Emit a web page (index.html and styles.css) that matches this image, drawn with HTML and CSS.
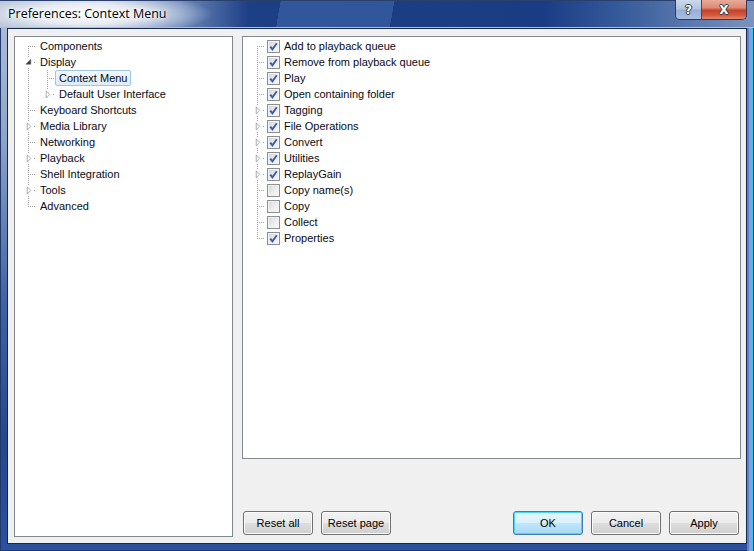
FILE: index.html
```html
<!DOCTYPE html>
<html>
<head>
<meta charset="utf-8">
<link rel="stylesheet" href="styles.css">
</head>
<body>
<div class="window">
  <div class="titlebar">
    <span class="title">Preferences: Context Menu</span>
    <div class="caption">
      <span class="cap help">?</span>
      <span class="cap close">X</span>
    </div>
  </div>
  <div class="client">
    <div class="panel nav">
      <div class="row"><span class="conn first"></span><span class="lbl">Components</span></div>
      <div class="row"><span class="conn mid"><span class="exp"><svg width="9" height="10" viewBox="0 0 9 10"><path d="M6.5 2 L6.5 7.5 L1 7.5 Z" fill="#3a3a3a" stroke="#5a5a5a" stroke-width="0.6"/></svg></span></span><span class="lbl">Display</span></div>
      <div class="row"><span class="ind"></span><span class="conn mid"></span><span class="lbl sel">Context Menu</span></div>
      <div class="row"><span class="ind"></span><span class="conn last"><span class="exp"><svg width="9" height="10" viewBox="0 0 9 10"><path d="M2.5 1.5 L6.5 5.5 L2.5 9.5 Z" fill="#fff" stroke="#a2a2a2"/></svg></span></span><span class="lbl">Default User Interface</span></div>
      <div class="row"><span class="conn mid"></span><span class="lbl">Keyboard Shortcuts</span></div>
      <div class="row"><span class="conn mid"><span class="exp"><svg width="9" height="10" viewBox="0 0 9 10"><path d="M2.5 1.5 L6.5 5.5 L2.5 9.5 Z" fill="#fff" stroke="#a2a2a2"/></svg></span></span><span class="lbl">Media Library</span></div>
      <div class="row"><span class="conn mid"></span><span class="lbl">Networking</span></div>
      <div class="row"><span class="conn mid"><span class="exp"><svg width="9" height="10" viewBox="0 0 9 10"><path d="M2.5 1.5 L6.5 5.5 L2.5 9.5 Z" fill="#fff" stroke="#a2a2a2"/></svg></span></span><span class="lbl">Playback</span></div>
      <div class="row"><span class="conn mid"></span><span class="lbl">Shell Integration</span></div>
      <div class="row"><span class="conn mid"><span class="exp"><svg width="9" height="10" viewBox="0 0 9 10"><path d="M2.5 1.5 L6.5 5.5 L2.5 9.5 Z" fill="#fff" stroke="#a2a2a2"/></svg></span></span><span class="lbl">Tools</span></div>
      <div class="row"><span class="conn last"></span><span class="lbl">Advanced</span></div>
    </div>
    <div class="side">
      <div class="panel items">
        <div class="row"><span class="conn first"></span><span class="chk on"><svg width="11" height="11" viewBox="0 0 11 11"><path d="M2.3 5.6 L4.4 8.3 L8.8 2.2" fill="none" stroke="#3c5aa6" stroke-width="1.9"/></svg></span><span class="lbl">Add to playback queue</span></div>
        <div class="row"><span class="conn mid"></span><span class="chk on"><svg width="11" height="11" viewBox="0 0 11 11"><path d="M2.3 5.6 L4.4 8.3 L8.8 2.2" fill="none" stroke="#3c5aa6" stroke-width="1.9"/></svg></span><span class="lbl">Remove from playback queue</span></div>
        <div class="row"><span class="conn mid"></span><span class="chk on"><svg width="11" height="11" viewBox="0 0 11 11"><path d="M2.3 5.6 L4.4 8.3 L8.8 2.2" fill="none" stroke="#3c5aa6" stroke-width="1.9"/></svg></span><span class="lbl">Play</span></div>
        <div class="row"><span class="conn mid"></span><span class="chk on"><svg width="11" height="11" viewBox="0 0 11 11"><path d="M2.3 5.6 L4.4 8.3 L8.8 2.2" fill="none" stroke="#3c5aa6" stroke-width="1.9"/></svg></span><span class="lbl">Open containing folder</span></div>
        <div class="row"><span class="conn mid"><span class="exp"><svg width="9" height="10" viewBox="0 0 9 10"><path d="M2.5 1.5 L6.5 5.5 L2.5 9.5 Z" fill="#fff" stroke="#a2a2a2"/></svg></span></span><span class="chk on"><svg width="11" height="11" viewBox="0 0 11 11"><path d="M2.3 5.6 L4.4 8.3 L8.8 2.2" fill="none" stroke="#3c5aa6" stroke-width="1.9"/></svg></span><span class="lbl">Tagging</span></div>
        <div class="row"><span class="conn mid"><span class="exp"><svg width="9" height="10" viewBox="0 0 9 10"><path d="M2.5 1.5 L6.5 5.5 L2.5 9.5 Z" fill="#fff" stroke="#a2a2a2"/></svg></span></span><span class="chk on"><svg width="11" height="11" viewBox="0 0 11 11"><path d="M2.3 5.6 L4.4 8.3 L8.8 2.2" fill="none" stroke="#3c5aa6" stroke-width="1.9"/></svg></span><span class="lbl">File Operations</span></div>
        <div class="row"><span class="conn mid"><span class="exp"><svg width="9" height="10" viewBox="0 0 9 10"><path d="M2.5 1.5 L6.5 5.5 L2.5 9.5 Z" fill="#fff" stroke="#a2a2a2"/></svg></span></span><span class="chk on"><svg width="11" height="11" viewBox="0 0 11 11"><path d="M2.3 5.6 L4.4 8.3 L8.8 2.2" fill="none" stroke="#3c5aa6" stroke-width="1.9"/></svg></span><span class="lbl">Convert</span></div>
        <div class="row"><span class="conn mid"><span class="exp"><svg width="9" height="10" viewBox="0 0 9 10"><path d="M2.5 1.5 L6.5 5.5 L2.5 9.5 Z" fill="#fff" stroke="#a2a2a2"/></svg></span></span><span class="chk on"><svg width="11" height="11" viewBox="0 0 11 11"><path d="M2.3 5.6 L4.4 8.3 L8.8 2.2" fill="none" stroke="#3c5aa6" stroke-width="1.9"/></svg></span><span class="lbl">Utilities</span></div>
        <div class="row"><span class="conn mid"><span class="exp"><svg width="9" height="10" viewBox="0 0 9 10"><path d="M2.5 1.5 L6.5 5.5 L2.5 9.5 Z" fill="#fff" stroke="#a2a2a2"/></svg></span></span><span class="chk on"><svg width="11" height="11" viewBox="0 0 11 11"><path d="M2.3 5.6 L4.4 8.3 L8.8 2.2" fill="none" stroke="#3c5aa6" stroke-width="1.9"/></svg></span><span class="lbl">ReplayGain</span></div>
        <div class="row"><span class="conn mid"></span><span class="chk"></span><span class="lbl">Copy name(s)</span></div>
        <div class="row"><span class="conn mid"></span><span class="chk"></span><span class="lbl">Copy</span></div>
        <div class="row"><span class="conn mid"></span><span class="chk"></span><span class="lbl">Collect</span></div>
        <div class="row"><span class="conn last"></span><span class="chk on"><svg width="11" height="11" viewBox="0 0 11 11"><path d="M2.3 5.6 L4.4 8.3 L8.8 2.2" fill="none" stroke="#3c5aa6" stroke-width="1.9"/></svg></span><span class="lbl">Properties</span></div>
      </div>
      <div class="buttons">
        <button class="btn">Reset all</button>
        <button class="btn">Reset page</button>
        <span class="spacer"></span>
        <button class="btn default">OK</button>
        <button class="btn">Cancel</button>
        <button class="btn">Apply</button>
      </div>
    </div>
  </div>
</div>
</body>
</html>
```

FILE: styles.css
```css
* { box-sizing: border-box; }
html, body { margin: 0; padding: 0; background: #fff; }

.window {
  width: 754px;
  height: 551px;
  display: flex;
  flex-direction: column;
  padding: 0 7px 7px 7px;
  background:
    linear-gradient(to right, #22396a 0 1px, transparent 1px),
    linear-gradient(to left, #1d3160 0 1px, #38c2ee 1px 2px, #7fa2e0 2px 5px, #5b80c8 5px 7px, transparent 7px),
    linear-gradient(to top, #1b3a78 0 1px, transparent 1px),
    linear-gradient(to bottom, #b3c1d8 0, #8ea4c9 25%, #3d62a6 55%, #24488f 80%, #2a52a0 100%);
}

.titlebar {
  height: 28px;
  margin: 0 -7px;
  padding: 0 7px 0 8px;
  display: flex;
  align-items: center;
  justify-content: space-between;
  border-top: 1px solid #2a3f6c;
  border-bottom: 1px solid #a9c0e4;
  background:
    radial-gradient(ellipse 125px 22px at 88px 13px, rgba(255,255,255,0.95) 0, rgba(255,255,255,0.75) 45%, rgba(255,255,255,0) 100%),
    linear-gradient(100deg, rgba(255,255,255,0) 0 37%, rgba(90,130,200,0.35) 37% 52%, rgba(255,255,255,0) 52%),
    linear-gradient(to right, #aebcd3 0, #a3b4cf 14%, #6d89ba 24%, #1d3f84 33%, #1b3d83 60%, #1a3c84 72%, #355a9a 82%, #7b93bd 100%);
}

.title {
  font-family: "Open Sans", "Noto Sans", sans-serif;
  font-size: 12.5px;
  color: #000;
  line-height: 16px;
  text-shadow: 0 0 6px #fff, 0 0 3px #fff;
}

.caption {
  align-self: flex-start;
  margin-top: -1px;
  display: flex;
  height: 20px;
  border: 1px solid #2b3c60;
  border-top: none;
  border-radius: 0 0 5px 5px;
  overflow: hidden;
}
.cap {
  display: flex;
  align-items: center;
  justify-content: center;
  font-family: "DejaVu Sans", sans-serif;
  font-weight: bold;
  color: #fff;
  font-size: 12px;
  text-shadow: 1px 0 0 #3a3a3a, -1px 0 0 #3a3a3a, 0 1px 0 #3a3a3a, 0 -1px 0 #3a3a3a;
}
.help {
  width: 26px;
  border-right: 1px solid #3a4a6a;
  background: linear-gradient(#cdd9ec 0, #b3c4e0 45%, #98aed4 55%, #a9bfe2 100%);
}
.close {
  width: 44px;
  background: linear-gradient(#e9ab9b 0, #dc8a74 40%, #c5432a 55%, #d3593c 80%, #e08a70 100%);
}

.client {
  flex: 1;
  display: flex;
  gap: 9px;
  padding: 7px 5px 6px 6px;
  background: #f0f0f0;
  border: 1px solid #15284e;
  font-family: "Liberation Sans", Arial, sans-serif;
  font-size: 11px;
  color: #000;
}

.panel {
  background: #fff;
  border: 1px solid #828790;
  padding-top: 1px;
}
.nav { width: 219px; padding-left: 2px; }
.side {
  flex: 1;
  display: flex;
  flex-direction: column;
}
.items { height: 423px; padding-left: 3px; }

.row {
  height: 16px;
  display: flex;
  align-items: center;
}

.ind, .conn {
  width: 19px;
  height: 16px;
  flex: none;
  display: flex;
  align-items: center;
  background-repeat: no-repeat;
}
.ind {
  background-image: repeating-linear-gradient(to bottom, #a0a0a0 0 1px, transparent 1px 2px);
  background-position: 11px 0;
  background-size: 1px 16px;
}
.conn {
  background-image:
    repeating-linear-gradient(to bottom, #a0a0a0 0 1px, transparent 1px 2px),
    repeating-linear-gradient(to right, #a0a0a0 0 1px, transparent 1px 2px);
}
.conn.first { background-position: 11px 8px, 13px 8px; background-size: 1px 8px, 7px 1px; }
.conn.mid   { background-position: 11px 0, 13px 8px; background-size: 1px 16px, 7px 1px; }
.conn.last  { background-position: 11px 0, 13px 8px; background-size: 1px 9px, 7px 1px; }

.exp {
  margin-left: 8px;
  width: 8px;
  height: 10px;
  background: #fff;
  display: flex;
}
.exp svg { display: block; }

.lbl {
  padding: 0 3px;
  border: 1px solid transparent;
  border-radius: 2px;
  line-height: 14px;
  white-space: nowrap;
  color: #0a0a14;
}
.lbl.sel {
  background: linear-gradient(#f3f9fe, #dcecfa);
  border-color: #9ec5ea;
}

.chk {
  margin-left: 2px;
  width: 13px;
  height: 13px;
  flex: none;
  border: 1px solid #8e8f8f;
  background: linear-gradient(135deg, #d2d4d7 0, #eceded 55%, #fbfbfb 100%);
  box-shadow: inset 0 0 0 1px #f2f2f2;
}
.chk svg { display: block; }

.buttons {
  margin-top: auto;
  display: flex;
  gap: 8px;
  padding: 0 2px 2px 1px;
}
.spacer { flex: 1; }
.btn {
  width: 70px;
  height: 24px;
  margin: 0;
  padding: 0;
  font-family: "Liberation Sans", Arial, sans-serif;
  font-size: 11px;
  color: #000;
  border: 1px solid #707070;
  border-radius: 3px;
  background: linear-gradient(#f2f2f2 0, #ebebeb 48%, #dddddd 52%, #cfcfcf 100%);
  box-shadow: inset 0 0 0 1px #fbfbfb;
}
.btn.default {
  border-color: #3c7fb1;
  background: linear-gradient(#eaf6fd 0, #d9f0fc 48%, #bee6fd 52%, #a7d9f5 100%);
  box-shadow: inset 0 0 0 1px #48d7fb;
}
```
